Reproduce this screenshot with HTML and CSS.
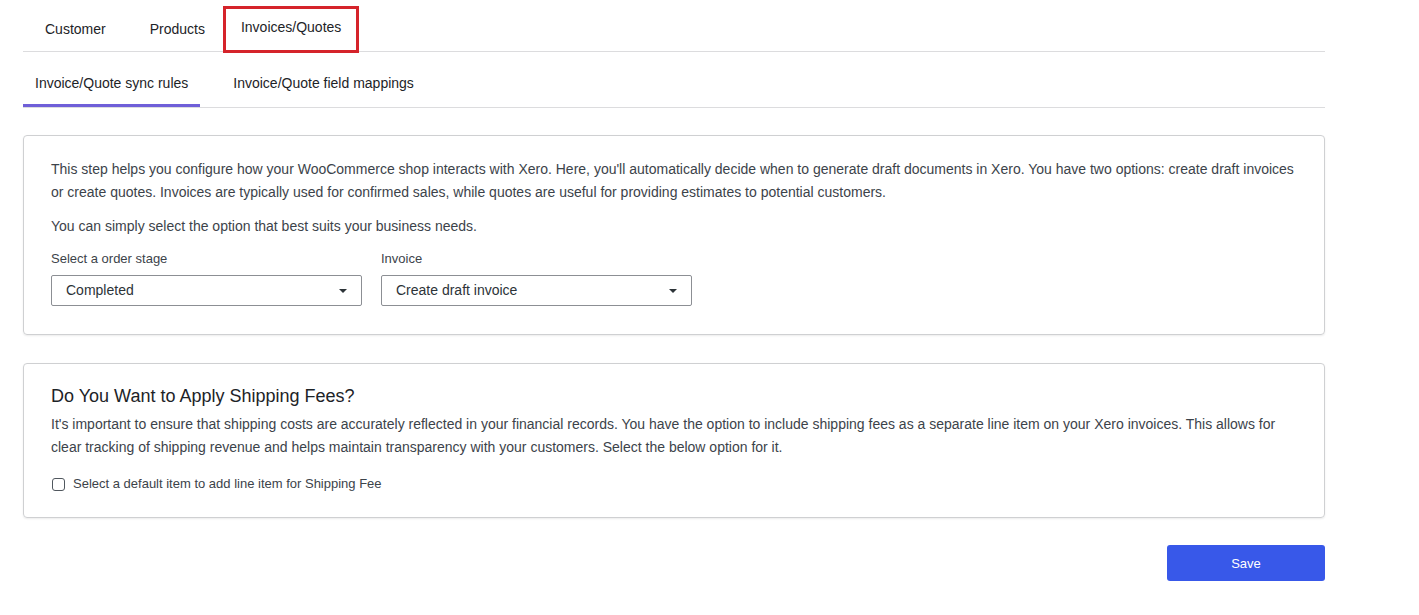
FILE: index.html
```html
<!DOCTYPE html>
<html>
<head>
    <title>Invoices/Quotes</title>
    <link rel="stylesheet" href="styles.css">
</head>
<body>
    <div class="wrap">
        <div class="main-tabs">
            <div class="main-tab">Customer</div>
            <div class="main-tab">Products</div>
            <div class="main-tab marked">Invoices/Quotes</div>
        </div>
        <div class="sub-tabs">
            <div class="sub-tab active">Invoice/Quote sync rules</div>
            <div class="sub-tab">Invoice/Quote field mappings</div>
        </div>

        <div class="card card-rules">
            <p>This step helps you configure how your WooCommerce shop interacts with Xero. Here, you'll automatically decide when to generate draft documents in Xero. You have two options: create draft invoices or create quotes. Invoices are typically used for confirmed sales, while quotes are useful for providing estimates to potential customers.</p>
            <p class="second">You can simply select the option that best suits your business needs.</p>
            <div class="fields">
                <div class="field">
                    <label>Select a order stage</label>
                    <div class="select">Completed<span class="caret"></span></div>
                </div>
                <div class="field">
                    <label>Invoice</label>
                    <div class="select">Create draft invoice<span class="caret"></span></div>
                </div>
            </div>
        </div>

        <div class="card card-shipping">
            <h3>Do You Want to Apply Shipping Fees?</h3>
            <p>It's important to ensure that shipping costs are accurately reflected in your financial records. You have the option to include shipping fees as a separate line item on your Xero invoices. This allows for clear tracking of shipping revenue and helps maintain transparency with your customers. Select the below option for it.</p>
            <label class="check"><span class="box"></span>Select a default item to add line item for Shipping Fee</label>
        </div>

        <div class="actions">
            <button class="save">Save</button>
        </div>
    </div>
</body>
</html>
```
FILE: styles.css
```css
body {
    margin: 0;
    font-family: "Liberation Sans", Arial, sans-serif;
    color: #3c434a;
    background: #fff;
}
.wrap {
    width: 1302px;
    margin-left: 23px;
}
.main-tabs {
    display: flex;
    height: 52px;
    border-bottom: 1px solid #dcdcde;
    box-sizing: border-box;
}
.main-tab {
    padding: 19px 22px 13px 22px;
    font-size: 14px;
    line-height: 20px;
    color: #1d2327;
}
.main-tab:nth-child(2) {
    padding-right: 18px;
}
.main-tab.marked {
    margin-top: 6px;
    height: 47px;
    box-sizing: border-box;
    padding: 8px 15px 0 15px;
    border: 3px solid #d5232a;
}
.sub-tabs {
    display: flex;
    gap: 21px;
    border-bottom: 1px solid #dcdcde;
}
.sub-tab {
    padding: 22px 12px 11px 12px;
    font-size: 14px;
    line-height: 19px;
    color: #1d2327;
    border-bottom: 3px solid transparent;
}
.sub-tab.active {
    border-bottom-color: #6f5fd8;
}
.card {
    border: 1px solid #cfd0d2;
    border-radius: 4px;
    box-shadow: 0 1px 2px rgba(0, 0, 0, 0.08);
    margin-top: 27px;
    padding: 22px 28px 28px 27px;
}
.card p {
    margin: 0;
    font-size: 14px;
    line-height: 23px;
}
.card p.second {
    margin-top: 11px;
}
.fields {
    display: flex;
    gap: 19px;
    margin-top: 12px;
}
.field label {
    display: block;
    font-size: 13px;
    line-height: 18px;
    color: #3c434a;
    margin-bottom: 7px;
}
.select {
    position: relative;
    width: 311px;
    height: 31px;
    box-sizing: border-box;
    border: 1px solid #8c8f94;
    border-radius: 2px;
    padding: 0 14px;
    font-size: 14px;
    line-height: 29px;
    color: #2c3338;
}
.caret {
    position: absolute;
    right: 14px;
    top: 13px;
    border-left: 4px solid transparent;
    border-right: 4px solid transparent;
    border-top: 4px solid #2c3338;
}
.card-shipping {
    margin-top: 28px;
    padding: 20px 28px 23px 27px;
}
.card-shipping h3 {
    margin: 0 0 5px 0;
    font-size: 18px;
    font-weight: normal;
    line-height: 24px;
    color: #1d2327;
}
.check {
    display: flex;
    align-items: center;
    margin-top: 15px;
    font-size: 13px;
    line-height: 20px;
}
.check .box {
    width: 11px;
    height: 11px;
    border: 1px solid #50575e;
    border-radius: 3px;
    margin: 0 8px 0 1px;
}
.actions {
    display: flex;
    justify-content: flex-end;
    margin-top: 27px;
}
.save {
    width: 158px;
    height: 36px;
    border: none;
    border-radius: 3px;
    background: #3858e9;
    color: #fff;
    font-family: "Liberation Sans", Arial, sans-serif;
    font-size: 13px;
}
```
